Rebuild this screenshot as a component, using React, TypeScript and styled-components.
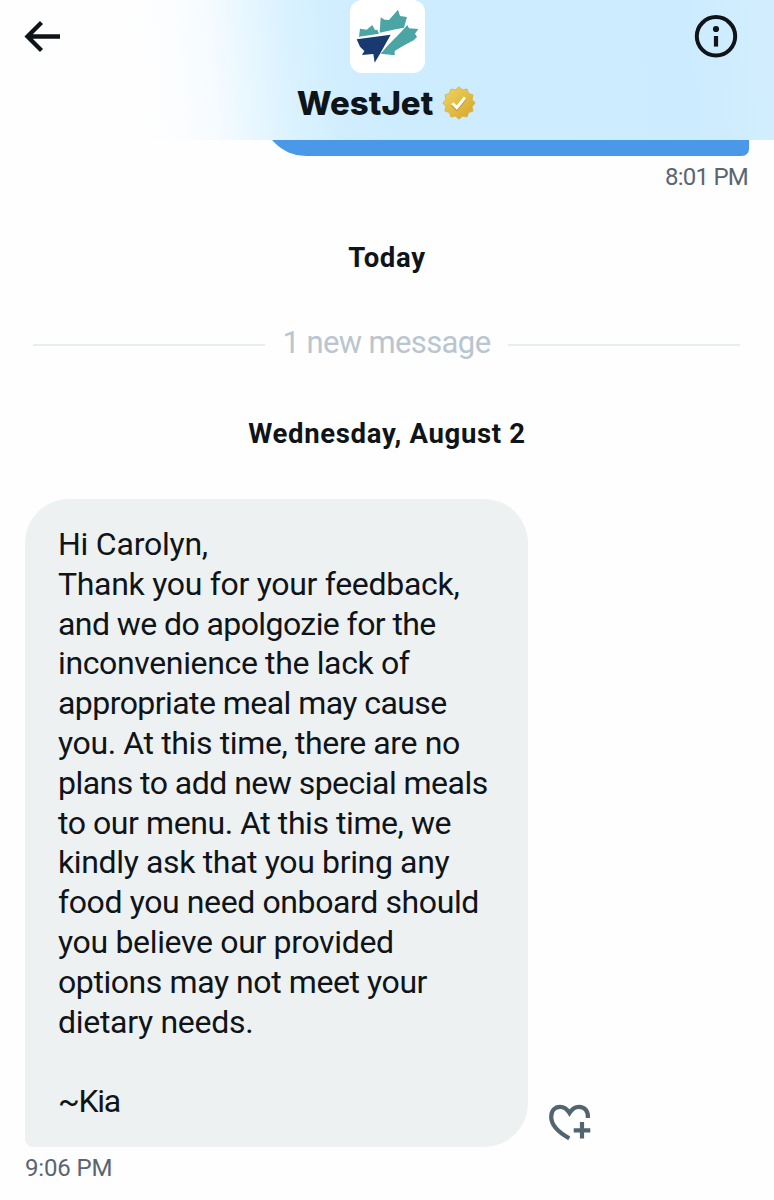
import React from 'react';
import styled, { createGlobalStyle } from 'styled-components';

const GlobalStyle = createGlobalStyle`
  * { box-sizing: border-box; }
  body {
    margin: 0;
    background: #fff;
    color: #0f1419;
    font-family: Roboto, "Liberation Sans", sans-serif;
  }
`;

const Screen = styled.main`
  width: 774px;
  height: 1200px;
  overflow: hidden;
  display: flex;
  flex-direction: column;
  background: #fefefe;
`;

const Header = styled.header`
  flex: none;
  height: 140px;
  padding: 0 24px;
  display: grid;
  grid-template-columns: 1fr auto 1fr;
  background: linear-gradient(
    85deg,
    #fefefe 0,
    #fefefe 140px,
    #fbfdff 185px,
    #f5fbff 220px,
    #e8f7ff 255px,
    #daf2ff 295px,
    #d1eeff 340px,
    #cdecff 400px,
    #cdecff 560px,
    #cdebff 690px,
    #d2eefe 774px
  );
`;

const IconButton = styled.button<{ $align: 'start' | 'end' }>`
  justify-self: ${(p) => p.$align};
  align-self: start;
  margin: ${(p) => (p.$align === 'end' ? '14px 12px 0 0' : '20px 0 0')};
  padding: 0;
  border: 0;
  background: none;
  color: #0f1419;
  svg { display: block; }
`;

const Profile = styled.div`
  display: flex;
  flex-direction: column;
  align-items: center;
`;

const Avatar = styled.div`
  width: 75px;
  height: 73px;
  border-radius: 12px;
  overflow: hidden;
  background: #fff;
  svg { display: block; }
`;

const NameRow = styled.div`
  display: flex;
  align-items: center;
  gap: 9px;
  height: 40px;
  margin: 10px 1px 0 0;
`;

const Name = styled.h1`
  margin: 0;
  font: 800 33px/40px Inter, sans-serif;
  white-space: nowrap;
`;

const Thread = styled.section`
  flex: 1;
  padding: 0 25px;
  display: flex;
  flex-direction: column;
`;

const SentClip = styled.div`
  height: 16px;
  overflow: hidden;
  display: flex;
  justify-content: flex-end;
  align-items: flex-end;
`;

const SentBubble = styled.div`
  flex: none;
  width: 487px;
  height: 100px;
  border-radius: 44px 44px 7px 44px;
  background: #4a99e9;
`;

const Time = styled.time<{ $side: 'left' | 'right'; $spacing: number }>`
  align-self: ${(p) => (p.$side === 'right' ? 'flex-end' : 'flex-start')};
  margin-top: 6px;
  margin-right: ${(p) => (p.$side === 'right' ? 1 : 0)}px;
  font-size: 24px;
  line-height: 30px;
  letter-spacing: ${(p) => p.$spacing}px;
  color: #5b6570;
`;

const DayLabel = styled.h2<{ $top: number }>`
  margin: ${(p) => p.$top}px 0 0;
  text-align: center;
  font-size: 27.5px;
  font-weight: 700;
  line-height: 34px;
  letter-spacing: 0.68px;
`;

const NewDivider = styled.div`
  display: flex;
  align-items: center;
  gap: 18px;
  margin: 48px 9px 0 8px;
  height: 40px;
  color: #b9c5cf;
  font-size: 31px;
  line-height: 40px;
  letter-spacing: -0.62px;
  white-space: nowrap;
  &::before,
  &::after {
    content: '';
    flex: 1;
    height: 2px;
    margin-top: 3px;
    background: #eaedef;
  }
`;

const MessageRow = styled.div`
  display: flex;
  align-items: flex-end;
  gap: 21px;
  margin-top: 48px;
`;

const Bubble = styled.div`
  width: 503px;
  height: 648px;
  padding: 26px 0 0 33px;
  border-radius: 44px 44px 44px 8px;
  background: #edf1f2;
`;

const Line = styled.div<{ $spacing: number }>`
  height: 39.8px;
  font-size: 32px;
  line-height: 39.8px;
  letter-spacing: ${(p) => p.$spacing}px;
  white-space: nowrap;
`;

const Reaction = styled.button`
  padding: 0;
  border: 0;
  margin-bottom: 5px;
  background: none;
  svg { display: block; }
`;

const lines: [string, number][] = [
  ['Hi Carolyn,', -0.23],
  ['Thank you for your feedback,', -0.3],
  ['and we do apolgozie for the', -0.58],
  ['inconvenience the lack of', -0.36],
  ['appropriate meal may cause', -0.56],
  ['you. At this time, there are no', -0.37],
  ['plans to add new special meals', -0.53],
  ['to our menu. At this time, we', -0.43],
  ['kindly ask that you bring any', -0.36],
  ['food you need onboard should', -0.39],
  ['you believe our provided', -0.33],
  ['options may not meet your', -0.42],
  ['dietary needs.', -0.3],
  ['', 0],
  ['~Kia', -1.3],
];

const badgePoints = Array.from({ length: 24 }, (_, i) => {
  const r = i % 2 ? 13.6 : 16.2;
  const a = (i * Math.PI) / 12;
  return `${(17 + r * Math.sin(a)).toFixed(2)},${(17 - r * Math.cos(a)).toFixed(2)}`;
}).join(' ');

const BackArrow = () => (
  <svg width="38" height="34" viewBox="0 0 38 34" fill="none" stroke="currentColor" strokeWidth="4.3">
    <path d="M36 16.500H3M17.500 2.500 3.500 16.500l14 14" />
  </svg>
);

const InfoIcon = () => (
  <svg width="44" height="44" viewBox="0 0 44 44">
    <circle cx="22" cy="22.3" r="19.2" fill="none" stroke="currentColor" strokeWidth="4" />
    <circle cx="22" cy="15" r="3.1" fill="currentColor" />
    <path d="M19.900 22h4.200v10.600h-4.200z" fill="currentColor" />
  </svg>
);

const LeafLogo = () => (
  <svg width="75" height="73" viewBox="30 0 225 219">
    <g fill="#4ba5a4">
      <path d="M60 86 80 89 97 75 105 90 112 89 117 101 57 110z" />
      <path d="M119 98 122 52 134 59 147 60 174 29 180 48 201 51 192 83 160 89z" />
      <path d="M186 93 202 75 207 85 235 87 225 101 231 111 221 121 190 137 164 153 164 166 122 161 142 138z" />
    </g>
    <path d="M50 118 152 104 121 160 104 188 100 162 66 165 73 153 60 140z" fill="#193a70" />
  </svg>
);

const GoldBadge = () => (
  <svg width="34" height="34" viewBox="0 0 34 34">
    <defs>
      <linearGradient id="gold" x1="0" y1="0" x2="1" y2="1">
        <stop offset="0" stopColor="#f0d568" />
        <stop offset="0.5" stopColor="#e3bd43" />
        <stop offset="1" stopColor="#d3a22f" />
      </linearGradient>
    </defs>
    <polygon points={badgePoints} fill="url(#gold)" stroke="#d9b044" strokeWidth="0.8" />
    <path d="m10.3 18.2 4.5 4.5 8.2-10.200" fill="none" stroke="#bd8b2b" strokeWidth="3.400" />
    <path d="m10.3 17.2 4.5 4.5 8.2-10.200" fill="none" stroke="#fff" strokeWidth="3" />
  </svg>
);

const HeartPlus = () => (
  <svg width="43" height="38" viewBox="0 0 43 38" fill="none" stroke="#536471" strokeWidth="4.2">
    <path d="M20.300 34.300C9 28 2.200 20.500 2.200 13 2.200 6.500 6 2.800 11 2.800c4 0 7 2 9.500 6.200C23 4.800 26.200 2.800 30 2.800c5.500 0 9.300 4 8.900 11.200" />
    <path d="M33 18v16.500M24.700 26.300h16.600" />
  </svg>
);

export default function App() {
  return (
    <>
      <GlobalStyle />
      <Screen>
        <Header>
          <IconButton $align="start" aria-label="Back">
            <BackArrow />
          </IconButton>
          <Profile>
            <Avatar>
              <LeafLogo />
            </Avatar>
            <NameRow>
              <Name>WestJet</Name>
              <GoldBadge />
            </NameRow>
          </Profile>
          <IconButton $align="end" aria-label="Conversation info">
            <InfoIcon />
          </IconButton>
        </Header>
        <Thread>
          <SentClip>
            <SentBubble />
          </SentClip>
          <Time $side="right" $spacing={-0.75}>8:01 PM</Time>
          <DayLabel $top={49}>Today</DayLabel>
          <NewDivider>1 new message</NewDivider>
          <DayLabel $top={54}>Wednesday, August 2</DayLabel>
          <MessageRow>
            <Bubble>
              {lines.map(([text, spacing], i) => (
                <Line key={i} $spacing={spacing}>{text}</Line>
              ))}
            </Bubble>
            <Reaction aria-label="Add reaction">
              <HeartPlus />
            </Reaction>
          </MessageRow>
          <Time $side="left" $spacing={-0.15}>9:06 PM</Time>
        </Thread>
      </Screen>
    </>
  );
}
